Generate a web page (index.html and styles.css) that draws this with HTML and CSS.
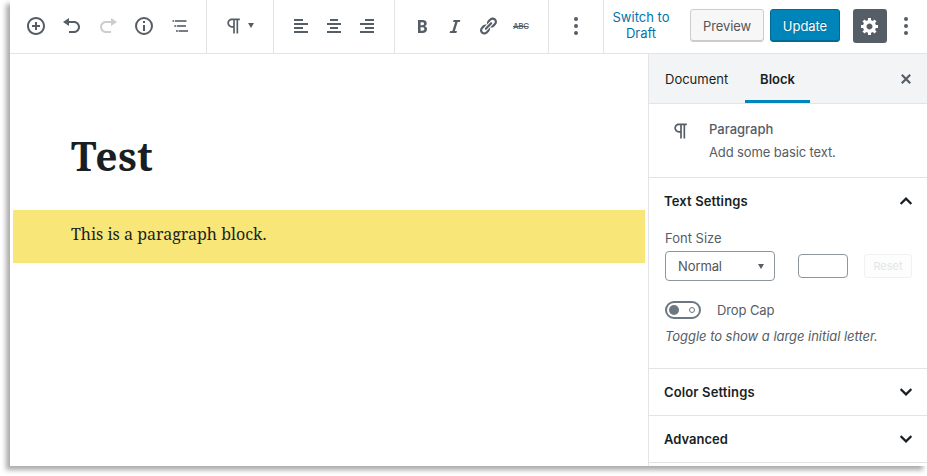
FILE: index.html
```html
<!DOCTYPE html>
<html lang="en">
<head>
<meta charset="utf-8">
<title>Edit Post</title>
<link rel="stylesheet" href="styles.css">
</head>
<body>
<div class="editor">
  <header class="toolbar">
    <div class="group group-history">
      <svg class="icon" viewBox="0 0 20 20"><path d="M10 1c-5 0-9 4-9 9s4 9 9 9 9-4 9-9-4-9-9-9zm0 16c-3.9 0-7-3.1-7-7s3.1-7 7-7 7 3.1 7 7-3.1 7-7 7zm1-11H9v3H6v2h3v3h2v-3h3V9h-3V6z"/></svg>
      <svg class="icon" viewBox="0 0 20 20"><path d="M12 5H7V2L1 6l6 4V7h5c2.2 0 4 1.8 4 4s-1.8 4-4 4H7v2h5c3.3 0 6-2.7 6-6s-2.7-6-6-6z"/></svg>
      <svg class="icon disabled" viewBox="0 0 20 20"><path d="M8 5h5V2l6 4-6 4V7H8c-2.2 0-4 1.8-4 4s1.8 4 4 4h5v2H8c-3.3 0-6-2.7-6-6s2.7-6 6-6z"/></svg>
      <svg class="icon" viewBox="0 0 20 20"><path fill-rule="evenodd" d="M10 1a9 9 0 1 0 0 18 9 9 0 0 0 0-18zm0 16a7 7 0 1 1 0-14 7 7 0 0 1 0 14zM9 9h2v6H9zM9 5h2v2H9z"/></svg>
      <svg class="icon outline" viewBox="0 0 20 20"><path d="M2.5 4h1.7v2H2.5zM5 4h11.5v2H5zM4.3 9H6v2H4.3zM6.8 9H16v2H6.8zM6 14h1.8v2H6zM8.5 14H18v2H8.5z"/></svg>
    </div>
    <div class="group group-type">
      <svg class="icon" viewBox="0 0 24 24"><path d="M11 5v7H9.5C7.6 12 6 10.4 6 8.5S7.6 5 9.5 5H11m8-2H9.5C6.5 3 4 5.5 4 8.5S6.5 14 9.5 14H11v7h2V5h2v16h2V5h2V3z"/></svg>
      <span class="caret"></span>
    </div>
    <div class="group group-align">
      <svg class="icon" viewBox="0 0 20 20"><path d="M3 3h9v2H3zM3 7h14v2H3zM3 11h9v2H3zM3 15h14v2H3z"/></svg>
      <svg class="icon" viewBox="0 0 20 20"><path d="M6 3h8v2H6zM3 7h14v2H3zM6 11h8v2H6zM3 15h14v2H3z"/></svg>
      <svg class="icon" viewBox="0 0 20 20"><path d="M8 3h9v2H8zM3 7h14v2H3zM8 11h9v2H8zM3 15h14v2H3z"/></svg>
    </div>
    <div class="group group-format">
      <svg class="icon" viewBox="0 0 20 20"><path d="M6 4v13h4.54c1.37 0 2.46-.33 3.26-1 .8-.66 1.2-1.58 1.2-2.77 0-.84-.17-1.51-.51-2.01s-.9-.85-1.67-1.03v-.09c.57-.1 1.02-.4 1.36-.9s.51-1.13.51-1.91c0-1.14-.39-1.98-1.17-2.5C12.75 4.26 11.5 4 9.78 4H6zm2.57 5.15V6.26h1.36c.73 0 1.27.11 1.61.32.34.22.51.58.51 1.07 0 .54-.16.92-.47 1.15s-.82.35-1.51.35h-1.5zm0 2.19h1.6c1.44 0 2.16.53 2.16 1.61 0 .6-.17 1.05-.51 1.34s-.86.43-1.57.43H8.57v-3.38z"/></svg>
      <svg class="icon" viewBox="0 0 20 20"><path d="M14.78 6h-2.13l-2.8 9h2.12l-.62 2H4.6l.62-2h2.14l2.8-9H8.03l.62-2h6.75z"/></svg>
      <svg class="icon" viewBox="0 0 20 20"><path d="M17.74 2.76c1.68 1.69 1.68 4.41 0 6.1l-1.53 1.52c-1.12 1.12-2.7 1.47-4.14 1.09l2.62-2.61.76-.77.76-.76c.84-.84.84-2.2 0-3.04-.84-.85-2.2-.85-3.04 0l-.77.76-3.38 3.38c-.37-1.44-.02-3.02 1.1-4.14l1.52-1.53c1.69-1.68 4.42-1.68 6.1 0zM8.59 13.43l5.34-5.34c.42-.42.42-1.1 0-1.52-.44-.43-1.13-.39-1.53 0l-5.33 5.34c-.42.42-.42 1.1 0 1.52.44.43 1.13.39 1.52 0zm-.76 2.29l4.14-4.15c.38 1.44.03 3.02-1.09 4.14l-1.52 1.53c-1.69 1.68-4.41 1.68-6.1 0-1.68-1.68-1.68-4.42 0-6.1l1.53-1.52c1.12-1.12 2.7-1.47 4.14-1.1l-4.14 4.15c-.85.84-.85 2.2 0 3.05.84.84 2.2.84 3.04 0z"/></svg>
      <span class="strike">ABC</span>
    </div>
    <div class="group group-more">
      <svg class="icon" viewBox="0 0 20 20"><circle cx="10" cy="3" r="2"/><circle cx="10" cy="10" r="2"/><circle cx="10" cy="17" r="2"/></svg>
    </div>
    <div class="actions">
      <a class="draft">Switch to Draft</a>
      <button class="button preview">Preview</button>
      <button class="button update">Update</button>
      <button class="settings" aria-label="Settings"><svg class="icon" viewBox="0 0 20 20"><path d="M18 12h-2.18c-.17.7-.44 1.35-.81 1.93l1.54 1.54-2.1 2.1-1.54-1.54c-.58.36-1.23.63-1.91.79V19H8v-2.18c-.68-.16-1.33-.43-1.91-.79l-1.54 1.54-2.12-2.12 1.54-1.54c-.36-.58-.63-1.23-.79-1.91H1V9.03h2.17c.16-.7.44-1.35.8-1.94L2.43 5.55l2.1-2.1 1.54 1.54c.58-.37 1.24-.64 1.93-.81V2h3v2.18c.68.16 1.33.43 1.91.79l1.54-1.54 2.12 2.12-1.54 1.54c.36.59.64 1.24.8 1.94H18V12zm-8.5 1.5c1.66 0 3-1.34 3-3s-1.34-3-3-3-3 1.34-3 3 1.34 3 3 3z"/></svg></button>
      <svg class="icon menu" viewBox="0 0 20 20"><circle cx="10" cy="3" r="2"/><circle cx="10" cy="10" r="2"/><circle cx="10" cy="17" r="2"/></svg>
    </div>
  </header>
  <div class="body">
    <main class="canvas">
      <h1>Test</h1>
      <p class="block">This is a paragraph block.</p>
    </main>
    <aside class="sidebar">
      <nav class="tabs">
        <span class="tab">Document</span>
        <span class="tab active">Block</span>
        <svg class="close" viewBox="0 0 10 10"><path d="M.8.8l8.4 8.4M9.2.8L.8 9.2"/></svg>
      </nav>
      <section class="card">
        <svg class="icon" viewBox="0 0 24 24"><path d="M11 5v7H9.5C7.6 12 6 10.4 6 8.5S7.6 5 9.5 5H11m8-2H9.5C6.5 3 4 5.5 4 8.5S6.5 14 9.5 14H11v7h2V5h2v16h2V5h2V3z"/></svg>
        <div>
          <div class="card-title">Paragraph</div>
          <div class="card-text">Add some basic text.</div>
        </div>
      </section>
      <section class="panel">
        <h2><span class="heading">Text Settings</span><svg class="chevron" viewBox="0 0 12 8"><path d="M.6 6.9L6 1.6l5.4 5.3"/></svg></h2>
        <div class="label">Font Size</div>
        <div class="sizes">
          <div class="select"><span>Normal</span><i class="caret small"></i></div>
          <input class="number" aria-label="Custom size">
          <button class="reset" disabled>Reset</button>
        </div>
        <div class="toggle-row"><span class="toggle"><i class="knob"></i><i class="ring"></i></span><span class="toggle-label">Drop Cap</span></div>
        <p class="help">Toggle to show a large initial letter.</p>
      </section>
      <section class="panel closed"><h2><span class="heading">Color Settings</span><svg class="chevron" viewBox="0 0 12 8"><path d="M.6 1.1L6 6.4l5.4-5.3"/></svg></h2></section>
      <section class="panel closed"><h2><span>Advanced</span><svg class="chevron" viewBox="0 0 12 8"><path d="M.6 1.1L6 6.4l5.4-5.3"/></svg></h2></section>
    </aside>
  </div>
</div>
</body>
</html>
```
FILE: styles.css
```css
* { box-sizing: border-box; }
body { margin: 0; width: 927px; height: 476px; overflow: hidden; background: #fff; font: 13px/20px Inter, sans-serif; color: #191e23; }
button, input { font-family: inherit; margin: 0; }
h1, h2, p { margin: 0; }
.editor { width: 917px; height: 466px; margin-left: 10px; display: flex; flex-direction: column; background: #fff; box-shadow: -4px 4px 5px #aaa; }
.toolbar { height: 54px; display: flex; flex: none; border-bottom: 1px solid #e2e4e7; }
.icon { width: 20px; height: 20px; fill: #555d66; flex: none; display: block; }
.disabled { opacity: .3; }
.outline { opacity: .8; }
.group { display: flex; align-items: center; padding-bottom: 1px; border-right: 1px solid #e2e4e7; }
.group-history { width: 197px; gap: 16px; padding-left: 16px; }
.group-type { width: 67px; padding-left: 17px; gap: 4px; }
.caret { border: 3px solid transparent; border-top: 5px solid #555d66; border-bottom: 0; }
.group-type .caret { margin-bottom: 2px; }
.group-align { width: 121px; padding-left: 17px; gap: 13px; }
.group-format { width: 154px; padding-left: 17px; gap: 13px; }
.strike { font: 500 8px/10px Inter, sans-serif; letter-spacing: -.4px; color: #555d66; text-decoration: line-through; margin-left: 2px; }
.group-more { width: 55px; padding-left: 17px; }
.actions { flex: 1; display: flex; align-items: center; padding-bottom: 1px; }
.draft { width: 76px; line-height: 16px; text-align: center; color: #0073aa; padding: 0 8px; margin: 0 11px 3px -1px; }
.button { height: 33px; font-size: 13px; border-radius: 3px; padding: 0; margin-bottom: 1px; }
.preview { width: 74px; background: #f7f7f7; border: 1px solid #ccc; color: #555; box-shadow: inset 0 -1px #ccc; letter-spacing: -.1px; }
.update { width: 70px; margin-left: 6px; background: #0085ba; border: 1px solid #006a95; box-shadow: inset 0 -1px #006a95; color: #fff; text-shadow: 0 -1px 1px #005d82; letter-spacing: -.05px; }
.settings { width: 34px; height: 34px; margin-left: 13px; border: 0; border-radius: 3px; background: #555d66; padding: 0 0 0 7px; }
.settings .icon { fill: #fff; }
.menu { margin-left: 9px; }
.body { flex: 1; min-height: 0; display: flex; }
.canvas { width: 638px; padding: 74px 3px 0; font-family: "Noto Serif", "DejaVu Serif Condensed", "DejaVu Serif", serif; }
h1 { font-size: 39px; line-height: 56px; padding-left: 58px; letter-spacing: .3px; }
.block { margin-top: 26px; height: 53px; padding-left: 58px; background: #f8e679; font-size: 16px; line-height: 49px; }
.sidebar { width: 279px; border-left: 1px solid #e2e4e7; overflow: hidden; }
.tabs { height: 50px; display: flex; align-items: center; background: #f3f4f5; border-bottom: 1px solid #e2e4e7; }
.tab { height: 49px; line-height: 50px; width: 96px; padding-left: 16px; }
.tab.active { width: 65px; padding: 0; text-align: center; font-weight: 600; box-shadow: inset 0 -3px #0085ba; }
.close { width: 10px; height: 10px; margin-left: 91px; fill: none; stroke: #555d66; stroke-width: 2.2; }
.card { height: 74px; display: flex; padding: 15px 0 0 22px; gap: 18px; border-bottom: 1px solid #e2e4e7; color: #555d66; }
.card .icon { margin-top: 2px; }
.card-title { font-weight: 500; margin-bottom: 3px; }
.card-text { letter-spacing: -.12px; }
.panel { height: 191px; padding: 0 15px; border-bottom: 1px solid #e2e4e7; color: #555d66; }
.panel.closed { height: 47px; }
.panel h2 { height: 46px; display: flex; align-items: center; justify-content: space-between; color: #191e23; font-size: 13px; font-weight: 600; }
.heading { letter-spacing: .14px; }
.chevron { width: 12px; height: 8px; fill: none; stroke: #191e23; stroke-width: 2.2; }
.label { padding-left: 1px; margin-top: 4px; }
.sizes { display: flex; align-items: center; padding-left: 1px; margin-top: 3px; }
.select { width: 110px; height: 30px; border: 1px solid #8d96a0; border-radius: 4px; padding: 0 10px 0 12px; display: flex; align-items: center; justify-content: space-between; color: #555; letter-spacing: -.1px; }
.number { width: 50px; height: 24px; border: 1px solid #8d96a0; border-radius: 4px; margin-left: 23px; padding: 0; }
.reset { width: 48px; height: 24px; margin-left: 16px; padding: 0; border: 1px solid #f1f1f1; border-radius: 3px; background: #fdfdfd; color: #e3e5e7; font-size: 11px; }
.toggle-row { display: flex; align-items: center; gap: 16px; padding-left: 1px; margin-top: 19px; }
.toggle-label { letter-spacing: -.1px; }
.toggle { width: 36px; height: 18px; border: 2px solid #6c7781; border-radius: 9px; display: flex; align-items: center; justify-content: space-between; padding: 0 4px 0 2px; }
.knob { width: 10px; height: 10px; border-radius: 50%; background: #6c7781; }
.ring { width: 6px; height: 6px; border-radius: 50%; border: 1.5px solid #6c7781; }
.help { font-style: italic; padding-left: 1px; margin-top: 6px; letter-spacing: -.04px; }
```
